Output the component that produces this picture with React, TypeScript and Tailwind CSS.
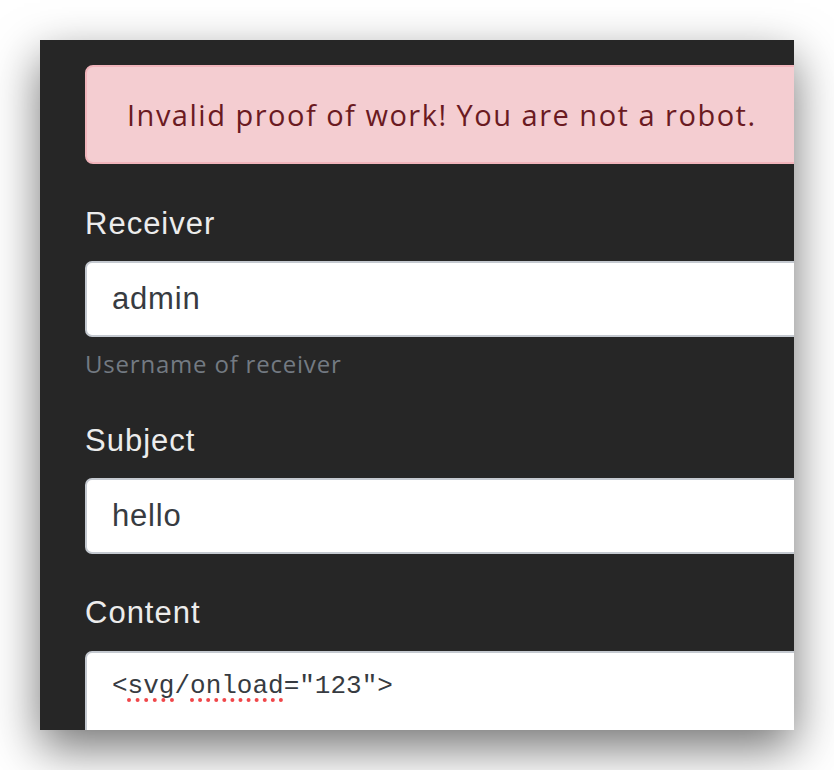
import React from 'react';

const sans = { fontFamily: '"Liberation Sans", Arial, sans-serif' };
const round = { fontFamily: '"Open Sans", "Noto Sans", sans-serif' };

function Field({ label, value, help }: { label: string; value: string; help?: string }) {
  return (
    <div className="mt-[37px]">
      <div className="pt-[2px] text-[31px] leading-[42px] text-[#ececec] tracking-[1px]">{label}</div>
      <div className="mt-[16px] h-[76px] w-[900px] rounded-[7px] border-2 border-[#c4c9d0] bg-white pl-[25px] flex items-center text-[31px] text-[#373b41] tracking-[0.8px]">
        {value}
      </div>
      {help && (
        <div className="mt-[9px] text-[24px] leading-[36px] text-[#737a82] tracking-[0.8px]" style={round}>
          {help}
        </div>
      )}
    </div>
  );
}

export default function App() {
  return (
    <div className="w-[834px] h-[770px] bg-white overflow-hidden" style={sans}>
      <div className="ml-[40px] mt-[40px] w-[754px] h-[690px] bg-[#262626] overflow-hidden shadow-[0_18px_45px_rgba(0,0,0,0.55)]">
        <div className="pl-[45px] pt-[25px] w-[1000px]">
          <div
            className="h-[99px] w-[900px] rounded-[8px] border-2 border-[#f1b4bb] bg-[#f4cdd1] pl-[40px] flex items-center text-[29px] text-[#6a1a22] tracking-[1.5px]"
            style={round}
          >
            Invalid proof of work! You are not a robot.
          </div>
          <Field label="Receiver" value="admin" help="Username of receiver" />
          <div className="-mt-[1px]">
            <Field label="Subject" value="hello" />
          </div>
          <div className="mt-[36px]">
            <div className="pt-[2px] text-[31px] leading-[42px] text-[#ececec] tracking-[1px]">Content</div>
            <div
              className="mt-[17px] h-[140px] w-[900px] rounded-[7px] border-2 border-[#c4c9d0] bg-white pl-[25px] pt-[14px] text-[26px] leading-[39px] text-[#373b41]"
              style={{ fontFamily: '"Liberation Mono", "Courier New", monospace' }}
            >
              &lt;<span className="underline decoration-dotted decoration-[#f0474a] decoration-[4px] underline-offset-[5px]">svg</span>/<span className="underline decoration-dotted decoration-[#f0474a] decoration-[4px] underline-offset-[5px]">onload</span>="123"&gt;
            </div>
          </div>
        </div>
      </div>
    </div>
  );
}
